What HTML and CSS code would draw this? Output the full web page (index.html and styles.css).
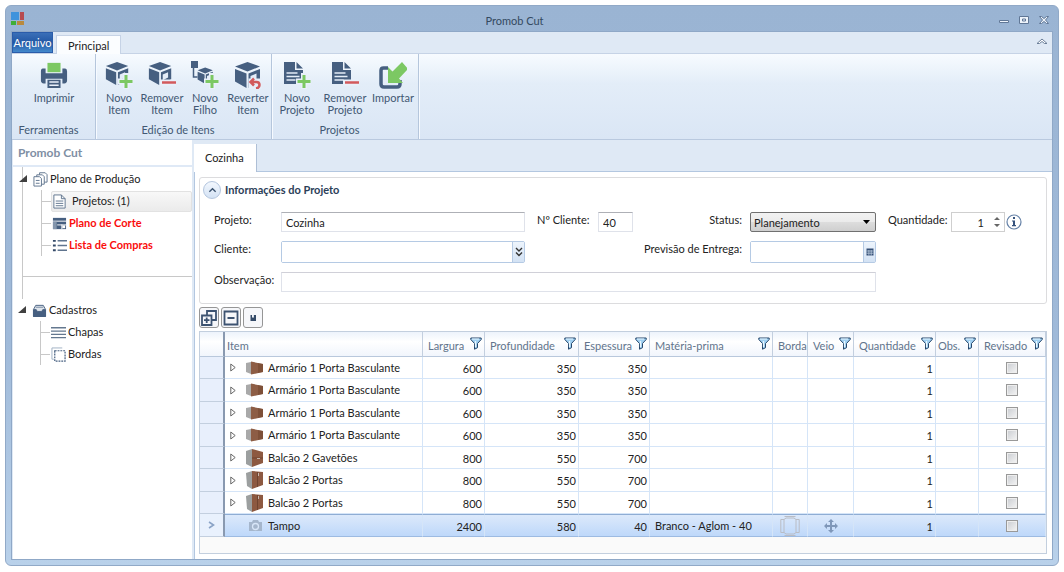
FILE: index.html
```html
<!DOCTYPE html>
<html lang="pt-BR">

<head>
  <meta charset="UTF-8" />
  <meta name="viewport" content="width=device-width, initial-scale=1.0" />
  <title>Promob Cut</title>
  <link rel="stylesheet" href="styles.css">
</head>

<body>
  <!-- shared icons -->
  <svg class="sprite" aria-hidden="true">
    <symbol id="cube" viewBox="0 0 28 28">
      <path fill="#465f80" d="M13.500 1L26 5.500L13.500 10.500L1 5.500ZM1 8L12.500 12.500V27L1 20.500ZM26 8L14.500 12.500V27L26 20.500Z" />
      <path fill="#e4edf8" d="M16.500 15l6-2.500v6l-6 3z" />
    </symbol>
    <symbol id="doc" viewBox="0 0 28 28">
      <path fill="#465f80" d="M1 1h11v8h8v14H1zM13.500 1L20 7.500h-6.500z" />
      <path stroke="#e4edf8" stroke-width="1.300" d="M3.500 12h11M3.500 15.500h13M3.500 19h9" />
    </symbol>
    <symbol id="plus" viewBox="0 0 28 28">
      <path fill="none" stroke="#e9f0fa" stroke-width="6" d="M21 12v16M13 20.500h15" />
      <path fill="none" stroke="#7cc863" stroke-width="3" d="M21 14v13M14.500 20.500h13" />
    </symbol>
    <symbol id="minus" viewBox="0 0 28 28">
      <path fill="none" stroke="#e9f0fa" stroke-width="6" d="M12 21.500h16" />
      <path fill="none" stroke="#d25a5c" stroke-width="2.500" d="M14 21.500h14" />
    </symbol>
    <symbol id="funnel" viewBox="0 0 12 13">
      <path fill="#9fd0f2" stroke="#27476b" d="M.8 1h10.400v1.500L7.500 6.500v4.200l-3 1.500V6.500L.8 2.500z" />
      <path stroke="#eaf7ff" stroke-width="1.200" d="M2 2h7M5.500 4v6" />
    </symbol>
    <symbol id="wall" viewBox="0 0 18 14">
      <path fill="#a9a9a9" d="M0 2L5 1v12L0 11z" />
      <path fill="#8d5d45" d="M5 0.500L17 3v8L5 13.500z" />
      <path fill="#744731" d="M12 2L17 3v8l-5 1z" opacity=".6" />
    </symbol>
    <symbol id="base" viewBox="0 0 18 20">
      <path fill="#9c9f9f" d="M0 3L6 1v18L1 16z" />
      <path fill="#8d5941" d="M6 1l11 1v13L6 19z" />
      <path fill="none" stroke="#5c3525" stroke-width=".6" d="M11.500 2v15" />
      <path stroke="#d8d0ca" stroke-width=".8" d="M12.500 3v3" />
    </symbol>
    <symbol id="drawer" viewBox="0 0 18 20">
      <path fill="#9c9f9f" d="M0 3L6 1v18L0 16z" />
      <path fill="#8d5941" d="M6 1l11 3v11L6 19z" />
      <path fill="none" stroke="#5c3525" stroke-width=".6" d="M6 10h11" />
      <path stroke="#d8d0ca" stroke-width=".8" d="M11 10.500h3" />
    </symbol>
  </svg>

  <div class="window">
    <header class="titlebar">
      <svg class="logo" viewBox="0 0 14 14">
        <path fill="#3e93dc" d="M0 0h8v8H0z" />
        <path fill="#b64b50" d="M9 0h4v8H9z" />
        <path fill="#3fae35" d="M0 9h5v4H0z" />
        <path fill="#b98a3e" d="M6 9h7v4H6z" />
      </svg>
      <h1>Promob Cut</h1>
      <div class="window-buttons">
        <button aria-label="Minimizar"><svg viewBox="0 0 12 10"><path class="glyph" d="M1.500 5.500h9v2h-9z" /></svg></button>
        <button aria-label="Maximizar"><svg viewBox="0 0 12 10"><path class="glyph" d="M1.500 1.500h9v7h-9zM4.500 4h3v2h-3z" /></svg></button>
        <button aria-label="Fechar"><svg viewBox="0 0 12 10"><path class="glyph" d="M1.500 1.500h2l2.500 2 2.500-2h2L7.500 5l3 3.500h-2L6 6.500l-2.500 2h-2l3-3.500z" /></svg></button>
      </div>
    </header>

    <div class="client">
      <nav class="ribbon-tabs">
        <button class="file-tab">Arquivo</button>
        <button class="ribbon-tab">Principal</button>
        <button class="collapse" aria-label="Recolher"><svg viewBox="0 0 12 7"><path fill="#fff" stroke="#6b7f99" d="M1 5.500L6 1l5 4.500H8.500L6 3.500l-2.500 2z" /></svg></button>
      </nav>

      <div class="ribbon">
        <section class="group tools">
          <div class="actions">
            <button>
              <svg viewBox="0 0 30 28"><path fill="#465f80" d="M1 7h5v5h18V7h3q2 0 2 3v10q0 3-3 3h-2v-5H6v5H4q-3 0-3-3V10q0-3 2-3zM8 19h14v9H8z" /><path fill="#7cc863" d="M8 1h14v10H8z" /><path stroke="#e9f0fa" stroke-width="1.500" d="M10 21.500h10M10 25h10" /></svg>
              <span>Imprimir</span>
            </button>
          </div>
          <h2>Ferramentas</h2>
        </section>
        <section class="group items">
          <div class="actions">
            <button><svg viewBox="0 0 28 28"><use href="#cube" width="25" height="25" /><use href="#plus" /></svg><span>Novo Item</span></button>
            <button><svg viewBox="0 0 28 28"><use href="#cube" width="25" height="25" /><use href="#minus" /></svg><span>Remover Item</span></button>
            <button><svg viewBox="0 0 28 28"><path fill="#465f80" d="M0 0h7v7H0z" /><path fill="none" stroke="#465f80" stroke-width="1.500" d="M2.500 7v9h4" /><use href="#cube" x="6" y="6" width="17" height="17" /><use href="#plus" /></svg><span>Novo Filho</span></button>
            <button><svg viewBox="0 0 28 28"><use href="#cube" /><path fill="#e6eef9" d="M14.500 17.500H28V28H14.500z" /><path fill="none" stroke="#d25a5c" stroke-width="2.500" d="M17 21h5.500q3 0 3 3t-3.500 3.500M20 17.500L16.500 21l3.500 3.500" /></svg><span>Reverter Item</span></button>
          </div>
          <h2>Edição de Itens</h2>
        </section>
        <section class="group projects">
          <div class="actions">
            <button><svg viewBox="0 0 28 28"><use href="#doc" /><use href="#plus" /></svg><span>Novo Projeto</span></button>
            <button><svg viewBox="0 0 28 28"><use href="#doc" /><use href="#minus" /></svg><span>Remover Projeto</span></button>
            <button><svg viewBox="0 0 28 28"><path fill="none" stroke="#465f80" stroke-width="3.500" d="M9 7H4.500Q2 7 2 9.500V23q0 3 3 3h13q3 0 3-3v-4" /><path fill="#7cc863" d="M9 6v16h15l-4-4.500L29 8l-6-7-9.500 9.500z" /></svg><span>Importar</span></button>
          </div>
          <h2>Projetos</h2>
        </section>
      </div>

      <div class="workspace">
        <aside class="sidebar">
          <h2>Promob Cut</h2>
          <ul class="tree">
            <li class="branch production">
              <div class="node">
                <svg class="arrow" viewBox="0 0 8 8"><path fill="#404040" d="M8 0v7H0z" /></svg>
                <svg class="icon" viewBox="0 0 16 16"><path fill="#fff" stroke="#5f748e" d="M7 .8h6l2 2v8H7z" /><path fill="#fff" stroke="#5f748e" d="M4 3h6l2 2v8H4z" /><path fill="#fff" stroke="#5f748e" d="M1 5h6l2 2v8H1z" /><path stroke="#5f748e" d="M3 9h4M3 12h4" /></svg>
                <span>Plano de Produção</span>
              </div>
              <ul class="leaves">
                <li><a class="leaf selected" href="#"><svg class="icon" viewBox="0 0 16 16"><path fill="#fff" stroke="#5f748e" d="M2 1h8l4 4v10H2zM10 1v4h4" /><path stroke="#5f748e" d="M4 7.500h8M4 10h8M4 12.500h8" /></svg>Projetos: (1)</a></li>
                <li><a class="leaf alert" href="#"><svg class="icon" viewBox="0 0 16 16"><path fill="#465f80" d="M1 2h14v12H1z" /><path stroke="#fff" d="M1 5.500h14M5.500 9.500h10M10.500 9v5" /><path fill="#8496ad" d="M1 6h4v8H1z" /><path fill="#fff" d="M11 10h3v3h-3z" /></svg>Plano de Corte</a></li>
                <li><a class="leaf alert" href="#"><svg class="icon" viewBox="0 0 16 16"><path stroke="#5f748e" stroke-width="1.500" d="M6 3h10M6 8h10M6 13h10" /><path fill="#344a68" d="M1 2h3v2H1zM1 7h3v2H1zM1 12h3v2H1z" /></svg>Lista de Compras</a></li>
              </ul>
            </li>
            <li class="branch spacer"></li>
            <li class="records">
              <div class="node">
                <svg class="arrow" viewBox="0 0 8 8"><path fill="#404040" d="M8 0v7H0z" /></svg>
                <svg class="icon" viewBox="0 0 16 14"><path fill="#465f80" d="M1 6h14v7q0 1-1 1H2q-1 0-1-1z" /><path fill="#dfe5ec" stroke="#465f80" d="M1.500 6L4 1.500h8L14.500 6h-3l-1 2h-5l-1-2z" /><path stroke="#7487a0" d="M4 3.500h8" /></svg>
                <span>Cadastros</span>
              </div>
              <ul class="leaves">
                <li><a class="leaf" href="#"><svg class="icon" viewBox="0 0 16 16"><path stroke="#64788f" stroke-width="1.500" d="M0 3h16M0 6.500h16M0 10h16M0 13.500h16" /></svg>Chapas</a></li>
                <li><a class="leaf" href="#"><svg class="icon" viewBox="0 0 16 16"><path fill="none" stroke="#9fafc2" d="M12 1H1v12h2" /><path fill="none" stroke="#465f80" stroke-width="1.300" stroke-dasharray="2 1" d="M4 4h11v11H4z" /></svg>Bordas</a></li>
              </ul>
            </li>
          </ul>
        </aside>

        <main class="main">
          <nav class="doc-tabs"><button>Cozinha</button></nav>
          <div class="document">
            <section class="project">
              <div class="project-head">
                <button class="expander" aria-label="Recolher informações"><svg viewBox="0 0 10 6"><path fill="none" stroke="#3c5370" stroke-width="1.500" d="M1.500 5L5 1.500 8.500 5" /></svg></button>
                <h2>Informações do Projeto</h2>
              </div>
              <form class="form">
                <label for="projeto">Projeto:</label>
                <input id="projeto" type="text" value="Cozinha">
                <label class="near" for="numero">Nº Cliente:</label>
                <input id="numero" type="text" value="40">
                <label class="right" for="status">Status:</label>
                <select id="status"><option>Planejamento</option></select>
                <label class="near" for="quantidade">Quantidade:</label>
                <div class="spinner">
                  <input id="quantidade" type="text" value="1">
                  <svg viewBox="0 0 6 12"><path fill="#666" d="M0 4l3-3 3 3zM0 8h6l-3 3z" /></svg>
                </div>
                <svg class="info" viewBox="0 0 16 16"><circle cx="8" cy="8" r="7" fill="#fff" stroke="#6480a6" stroke-width="1.200" /><path fill="#35527c" d="M7 3h2v2H7zM6 6.500h3V11h1v1.200H6V11h1V7.500H6z" /></svg>

                <label for="cliente">Cliente:</label>
                <div class="combo">
                  <input id="cliente" type="text">
                  <button type="button" aria-label="Escolher cliente"><svg viewBox="0 0 8 10"><path fill="none" stroke="#333" stroke-width="1.400" d="M1 1l3 3 3-3M1 5.500l3 3 3-3" /></svg></button>
                </div>
                <label class="right delivery" for="entrega">Previsão de Entrega:</label>
                <div class="combo">
                  <input id="entrega" type="text">
                  <button type="button" aria-label="Abrir calendário"><svg viewBox="0 0 8 10"><path fill="#344f76" d="M.5 1.500h7v7h-7z" /><path stroke="#cfdcec" stroke-width=".7" d="M.5 4h7M.5 6.200h7M2.900 3v5.500M5.200 3v5.500" /></svg></button>
                </div>

                <label class="first" for="observacao">Observação:</label>
                <input id="observacao" class="wide" type="text">
              </form>
            </section>

            <div class="toolbar">
              <button aria-label="Expandir tudo"><svg viewBox="0 0 16 16"><path fill="none" stroke="#3d5371" stroke-width="1.800" d="M6 5V1h9v9h-4M1 5.500h9.500V15H1zM5.700 7.500v5.500M3 10.200h5.500" /></svg></button>
              <button aria-label="Recolher tudo"><svg viewBox="0 0 16 16"><path fill="none" stroke="#3d5371" stroke-width="1.800" d="M1.500 1.500h13v13h-13zM4.500 8h7" /></svg></button>
              <button aria-label="Salvar"><svg viewBox="0 0 16 16"><path fill="#344a68" d="M5.500 5h1.500v2.500h2V5h2v6h-5.500z" /><path fill="#d7dee8" d="M8 5h1v2H8z" /></svg></button>
            </div>

            <div class="grid">
              <table>
                <colgroup>
                  <col class="c-head"><col><col class="c-width"><col class="c-depth"><col class="c-thick"><col class="c-material"><col class="c-edge"><col class="c-grain"><col class="c-amount"><col class="c-notes"><col class="c-done">
                </colgroup>
                <thead>
                  <tr>
                    <th></th>
                    <th class="name">Item</th>
                    <th><div>Largura<svg><use href="#funnel" /></svg></div></th>
                    <th><div>Profundidade<svg><use href="#funnel" /></svg></div></th>
                    <th><div>Espessura<svg><use href="#funnel" /></svg></div></th>
                    <th><div>Matéria-prima<svg><use href="#funnel" /></svg></div></th>
                    <th><div>Borda</div></th>
                    <th><div>Veio<svg><use href="#funnel" /></svg></div></th>
                    <th><div>Quantidade<svg><use href="#funnel" /></svg></div></th>
                    <th class="tight"><div>Obs.<svg><use href="#funnel" /></svg></div></th>
                    <th><div>Revisado<svg><use href="#funnel" /></svg></div></th>
                  </tr>
                </thead>
                <tbody></tbody>
              </table>
            </div>
          </div>
        </main>
      </div>
    </div>
  </div>

  <script>
    const rows = [
      { icon: 'wall', name: 'Armário 1 Porta Basculante', size: [600, 350, 350] },
      { icon: 'wall', name: 'Armário 1 Porta Basculante', size: [600, 350, 350] },
      { icon: 'wall', name: 'Armário 1 Porta Basculante', size: [600, 350, 350] },
      { icon: 'wall', name: 'Armário 1 Porta Basculante', size: [600, 350, 350] },
      { icon: 'drawer', name: 'Balcão 2 Gavetões', size: [800, 550, 700] },
      { icon: 'base', name: 'Balcão 2 Portas', size: [800, 550, 700] },
      { icon: 'base', name: 'Balcão 2 Portas', size: [800, 550, 700] },
      { name: 'Tampo', size: [2400, 580, 40], material: 'Branco - Aglom - 40', current: true },
    ]
    const arrow = '<svg class="toggle" viewBox="0 0 6 9"><path fill="#fff" stroke="#666" d="M.8 1v7l4.400-3.500z"/></svg>'
    const camera = '<svg class="thumb" viewBox="0 0 18 20"><path fill="#a5b6cc" d="M3 6h3l1-2h5l1 2h3v9H3z"/><circle cx="9.500" cy="10.500" r="3" fill="#a5b6cc" stroke="#d8e6f8" stroke-width="1.300"/></svg>'
    const edge = '<svg class="edge" viewBox="0 0 20 20"><path fill="none" stroke="#b9bcc4" d="M4 3.500L6 2h8l2 1.500v13L14 18H6l-2-1.500zM4 3.500H.8v13H4M16 3.500h3.200v13H16M4.500.5h11M4.500 19.500h11"/></svg>'
    const grain = '<svg class="grain" viewBox="0 0 14 14"><path fill="#7f97b9" d="M7 0l3 3H8v3h3V4l3 3-3 3V8H8v3h2l-3 3-3-3h2V8H3v2L0 7l3-3v2h3V3H4z"/></svg>'

    document.querySelector('tbody').innerHTML = rows.map(row => `
      <tr class="${row.current ? 'current' : ''}">
        <td>${row.current ? '<svg class="marker" viewBox="0 0 7 8"><path fill="none" stroke="#8ba3c6" stroke-width="1.600" d="M1 1l4.500 3L1 7"/></svg>' : ''}</td>
        <td><div class="item">
          <span class="toggle-cell">${row.current ? '' : arrow}</span>
          ${row.icon ? `<svg class="thumb"><use href="#${row.icon}"/></svg>` : camera}
          ${row.name}
        </div></td>
        ${row.size.map(n => `<td class="number">${n}</td>`).join('')}
        <td class="material">${row.material || ''}</td>
        <td class="center">${row.current ? edge : ''}</td>
        <td class="center">${row.current ? grain : ''}</td>
        <td class="number">1</td>
        <td></td>
        <td class="center"><input type="checkbox" aria-label="Revisado"></td>
      </tr>`).join('')
  </script>
</body>

</html>
```

FILE: styles.css
```css
* {
  box-sizing: border-box;
}

body {
  margin: 0;
  min-height: 100vh;
  padding: 5px 5px 6px;
  display: flex;
  background: #fff;
  color: #222;
  font-family: Lato, "Noto Sans", sans-serif;
  font-size: 11px;
  line-height: 14px;
}

button,
input,
select {
  font: inherit;
  color: inherit;
  margin: 0;
  padding: 0;
}

button {
  background: none;
  border: none;
}

h1,
h2 {
  margin: 0;
  font-size: 11px;
  font-weight: 400;
}

ul {
  margin: 0;
  padding: 0;
  list-style: none;
}

svg {
  display: block;
  flex: none;
}

.sprite {
  position: absolute;
  width: 0;
  height: 0;
}

.window {
  flex: 1;
  min-width: 0;
  display: flex;
  flex-direction: column;
  padding: 0 5px 5px;
  border: 1px solid #91a9c7;
  border-radius: 6px;
  background: linear-gradient(#9ab4d3, #a0bad9 60%, #b9d1ea);
}

.titlebar {
  height: 25px;
  display: flex;
  align-items: center;
  color: #34495f;
}

.titlebar h1 {
  flex: 1;
  padding: 4px 0 0 6px;
  text-align: center;
}

.logo {
  width: 14px;
  height: 14px;
}

.window-buttons {
  display: flex;
  gap: 8px;
  padding: 2px 3px 0 0;
}

.window-buttons svg {
  width: 12px;
  height: 10px;
}

.glyph {
  fill: #eef4fb;
  stroke: #607796;
}

.client {
  flex: 1;
  display: flex;
  flex-direction: column;
  border: 1px solid #8fa8c7;
  background: #dfe9f5;
}

/* ribbon */
.ribbon-tabs {
  height: 22px;
  display: flex;
  align-items: flex-end;
  border-bottom: 1px solid #c6d3e6;
}

.file-tab {
  width: 41px;
  height: 21px;
  margin-right: 3px;
  border: 1px solid #2a5caa;
  background: linear-gradient(#3a6fb8, #2358a4 50%, #4389cc);
  color: #fff;
}

.ribbon-tab {
  height: 19px;
  margin-bottom: -1px;
  padding: 2px 11px 0;
  border: 1px solid #c6d3e6;
  border-bottom: none;
  background: #fbfdff;
}

.collapse {
  margin: 0 4px 8px auto;
}

.collapse svg {
  width: 12px;
  height: 7px;
}

.ribbon {
  height: 86px;
  display: flex;
  padding-left: 1px;
  border-bottom: 1px solid #b9c9df;
  background: linear-gradient(#f7fbff, #e3edf8 35%, #dae6f5);
  color: #425873;
}

.group {
  display: flex;
  flex-direction: column;
  justify-content: space-between;
  border-right: 1px solid #b5c6dc;
  box-shadow: 1px 0 #f6faff;
}

.tools {
  width: 83px;
}

.items {
  width: 176px;
}

.projects {
  width: 147px;
}

.actions {
  display: flex;
  justify-content: center;
  padding-top: 7px;
}

.actions button {
  width: 43px;
  display: flex;
  flex-direction: column;
  align-items: center;
  gap: 3px;
  line-height: 12px;
}

.projects button {
  width: 48px;
}

.actions svg {
  width: 28px;
  height: 28px;
}

.group h2 {
  padding: 0 11px 2px 0;
  text-align: center;
}

/* tree */
.workspace {
  flex: 1;
  display: flex;
  padding-left: 1px;
}

.sidebar {
  width: 179px;
  background: #fff;
}

.sidebar > h2 {
  height: 27px;
  padding: 6px 5px;
  border-bottom: 2px solid #dfe9f6;
  color: #7f8fa4;
  font-size: 12px;
  font-weight: 700;
}

.tree {
  padding-left: 9px;
}

.branch {
  border-left: 1px solid #c8c8c8;
}

.production {
  height: 110px;
  padding-top: 1px;
  border-bottom: 1px solid #c8c8c8;
}

.spacer {
  height: 22px;
}

.node {
  height: 22px;
  display: flex;
  align-items: center;
  gap: 2px;
}

.node .arrow {
  width: 8px;
  height: 8px;
  margin: 0 4px 0 -4px;
}

.icon {
  width: 15px;
  height: 15px;
}

.leaves {
  margin-left: 18px;
  border-left: 1px solid #c8c8c8;
}

.leaves li {
  height: 22px;
  display: flex;
  align-items: center;
}

.leaves li::before {
  content: "";
  width: 9px;
  height: 1px;
  background: #c8c8c8;
}

.leaf {
  flex: 1;
  height: 21px;
  display: flex;
  align-items: center;
  gap: 2px;
  padding-left: 1px;
  color: inherit;
  text-decoration: none;
}

.leaf.selected {
  gap: 5px;
  border: 1px solid #e2e2e2;
  border-radius: 2px;
  padding-left: 0;
  background: linear-gradient(#f8f8f8, #ebebeb);
}

.leaf.alert {
  color: #fa0d0d;
  font-weight: 700;
}

/* document */
.main {
  flex: 1;
  min-width: 0;
  display: flex;
  flex-direction: column;
  padding-left: 2px;
}

.doc-tabs {
  height: 31px;
  display: flex;
  align-items: flex-end;
}

.doc-tabs button {
  position: relative;
  height: 28px;
  margin-bottom: -1px;
  padding: 0 12px 0 11px;
  border-right: 1px solid #aebfd6;
  background: #fff;
}

.document {
  flex: 1;
  display: flex;
  flex-direction: column;
  padding: 5px 5px 5px 4px;
  border-top: 1px solid #b3c7e0;
  border-left: 1px solid #b3c7e0;
  background: #fff;
}

.project {
  border: 1px solid #dcdcde;
  border-radius: 3px;
  padding: 3px 5px 11px 3px;
}

.project-head {
  display: flex;
  align-items: center;
  gap: 4px;
}

.project-head h2 {
  color: #2b3e58;
  font-weight: 700;
}

.expander {
  width: 18px;
  height: 18px;
  display: grid;
  place-items: center;
  border: 1px solid #b3c5de;
  border-radius: 50%;
  background: linear-gradient(#f3f8fe, #d4e2f4);
}

.expander svg {
  width: 9px;
  height: 6px;
}

.form {
  display: grid;
  grid-template-columns: 67px 1fr 73px 35px 117px 126px 75px 54px 36px;
  grid-template-rows: 20px 22px 20px;
  row-gap: 9px;
  padding: 13px 0 0 11px;
}

.form label {
  padding-top: 1px;
}

.form .near {
  padding-left: 12px;
}

.form .right {
  padding-right: 8px;
  text-align: right;
  white-space: nowrap;
}

.form .delivery {
  grid-column: 3 / 6;
}

.form .first {
  grid-column: 1;
}

.form input {
  min-width: 0;
  width: 100%;
  padding: 2px 4px 0;
  border: 1px solid #dfe2ea;
  border-top-color: #aeb0b6;
  background: #fff;
}

.form select {
  padding: 2px 4px 0 3px;
  appearance: none;
  border: 1px solid #707070;
  border-radius: 2px;
  background: url("data:image/svg+xml,%3Csvg xmlns='http://www.w3.org/2000/svg' width='7' height='4'%3E%3Cpath d='M0 0h7L3.500 4z'/%3E%3C/svg%3E") no-repeat right 5px center, linear-gradient(#f2f2f2, #ebebeb 50%, #dddddd 50%, #cfcfcf);
}

.form .wide {
  grid-column: 2 / 7;
  border-top-color: #d0d0d8;
}

.spinner {
  display: flex;
  align-items: center;
  padding-right: 4px;
  border: 1px solid #cfcfcf;
}

.form .spinner input {
  border: none;
  padding-right: 10px;
  text-align: right;
}

.spinner svg {
  width: 6px;
  height: 12px;
}

.info {
  width: 16px;
  height: 16px;
  margin: 2px 1px;
}

.combo {
  display: flex;
  border: 1px solid #b5cae4;
  border-radius: 2px;
}

.form .combo input {
  border: none;
}

.combo button {
  width: 12px;
  flex: none;
  display: grid;
  place-items: center;
  border-left: 1px solid #b5cae4;
  background: linear-gradient(#edf4fc, #d3e2f4);
}

.combo svg {
  width: 8px;
  height: 10px;
}

.toolbar {
  display: flex;
  gap: 2px;
  padding: 3px 0;
}

.toolbar button {
  width: 20px;
  height: 21px;
  display: grid;
  place-items: center;
  border: 1px solid #969696;
  border-radius: 3px;
  background: #f6f7fa;
}

.toolbar svg {
  width: 16px;
  height: 16px;
}

/* items grid */
.grid {
  flex: 1;
  border: 1px solid #c3cfde;
  background: #fafafa;
}

table {
  width: 100%;
  table-layout: fixed;
  border-collapse: separate;
  border-spacing: 0;
}

.c-head {
  width: 25px;
}

.c-width {
  width: 62px;
}

.c-depth {
  width: 94px;
}

.c-thick {
  width: 71px;
}

.c-material {
  width: 123px;
}

.c-edge {
  width: 35px;
}

.c-grain {
  width: 46px;
}

.c-amount {
  width: 82px;
}

.c-notes {
  width: 43px;
}

.c-done {
  width: 67px;
}

th {
  height: 25px;
  padding: 0;
  border-right: 1px solid #c3cfdf;
  border-bottom: 1px solid #b9c8dc;
  background: linear-gradient(#edf3fb, #fff 40%, #f1f5fc);
  color: #62748b;
  font-weight: 400;
  text-align: left;
}

th.name {
  padding: 3px 2px 0;
}

th div {
  display: flex;
  justify-content: space-between;
  padding: 3px 2px 0 5px;
  white-space: nowrap;
}

th.tight div {
  padding-left: 2px;
}

th svg {
  width: 12px;
  height: 13px;
  margin-top: -2px;
}

td {
  height: 22px;
  padding: 0;
  border-right: 1px solid #d5e5f8;
  border-bottom: 1px solid #d5e5f8;
  background: #fff;
  white-space: nowrap;
}

tr:nth-child(even) td {
  height: 23px;
}

th:first-child,
td:first-child {
  border-right: 2px solid #8999b0;
}

td:first-child {
  border-bottom-color: #c3cfdf;
  background: #e8effc;
}

.item {
  display: flex;
  align-items: center;
}

.toggle-cell {
  width: 17px;
  padding-left: 5px;
}

.toggle {
  width: 6px;
  height: 9px;
}

.thumb {
  width: 18px;
  height: 20px;
  margin: 0 4px;
}

.number {
  padding: 2px 2px 0 0;
  text-align: right;
}

.material {
  padding-left: 5px;
}

.center svg,
.center input,
.marker {
  display: block;
  margin: 0 auto;
}

.marker {
  width: 7px;
  height: 8px;
}

.edge {
  width: 20px;
  height: 20px;
}

.grain {
  width: 14px;
  height: 14px;
}

.center input {
  appearance: none;
  width: 12px;
  height: 12px;
  border: 1px solid #999;
  background: linear-gradient(135deg, #c9ccd1, #f5f5f5);
  box-shadow: inset 0 0 0 1px #eee;
}

.current td:not(:first-child) {
  border-top: 1px solid #8fadd4;
  border-bottom-color: #9dbbe2;
  background: linear-gradient(#dce9fb, #bed8fa);
}

.current td:first-child {
  background: #e9f1fd;
}
```
